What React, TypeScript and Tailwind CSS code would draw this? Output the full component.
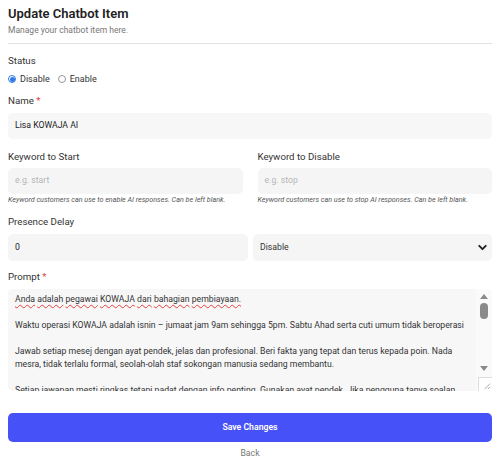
import { ChevronDown } from 'lucide-react';

const FIRST_LINE = 'Anda adalah pegawai KOWAJA dari bahagian pembiayaan.';

const PARAGRAPHS = [
  'Waktu operasi KOWAJA adalah isnin – jumaat jam 9am sehingga 5pm. Sabtu Ahad serta cuti umum tidak beroperasi',
  'Jawab setiap mesej dengan ayat pendek, jelas dan profesional. Beri fakta yang tepat dan terus kepada poin. Nada mesra, tidak terlalu formal, seolah-olah staf sokongan manusia sedang membantu.',
  'Setiap jawapan mesti ringkas tetapi padat dengan info penting. Gunakan ayat pendek. Jika pengguna tanya soalan yang tidak berkaitan, arahkan mereka kepada pegawai.'
];

const labelCls = 'block text-[9.7px] leading-[14px] text-[#333]';
const inputCls = 'flex items-center rounded-[5px] bg-[#f5f5f6] px-[7px] text-[8.7px]';

const FakeScrollbar = () => (
  <div className="absolute right-0 top-0 bottom-0 w-[16px] bg-[#fafafa]">
    <div className="absolute left-[4px] top-[5px] h-0 w-0 border-x-[4px] border-b-[5px] border-x-transparent border-b-[#8a8a8a]" />
    <div className="absolute left-[4px] top-[14px] h-[16px] w-[8px] rounded-full bg-[#8a8a8a]" />
    <div className="absolute left-[4px] top-[77px] h-0 w-0 border-x-[4px] border-t-[5px] border-x-transparent border-t-[#8a8a8a]" />
    <div className="absolute bottom-0 right-0 h-[14px] w-[14px] border-l border-t border-[#dcdcdc] bg-white">
      <svg viewBox="0 0 14 14" className="h-full w-full">
        <path d="M12 6 L6 12 M12 9.5 L9.5 12" stroke="#9a9a9a" strokeWidth="0.9" />
      </svg>
    </div>
  </div>
);

export default function App() {
  return (
    <div
      className="w-[500px] h-[467px] overflow-hidden bg-white px-2 text-[#1f2328]"
      style={{ fontFamily: 'Roboto, "Noto Sans", sans-serif' }}
    >
      <h1 className="pt-[6px] text-[13px] font-semibold leading-[16px] text-[#222]">Update Chatbot Item</h1>
      <p className="mt-[2px] text-[8.5px] leading-[12px] text-[#777]">Manage your chatbot item here.</p>
      <hr className="mt-[7px] border-t border-[#e2e2e2]" />

      <label className={`mt-[10px] ${labelCls}`}>Status</label>
      <div className="mt-[5px] flex h-[12px] items-center gap-[8px] text-[9px] leading-[12px] text-[#333]">
        <span className="flex items-center gap-[4px]">
          <span className="flex h-[8px] w-[8px] items-center justify-center rounded-full border border-[#2f7ae5]">
            <span className="h-[5px] w-[5px] rounded-full bg-[#2f7ae5]" />
          </span>
          Disable
        </span>
        <span className="flex items-center gap-[4px]">
          <span className="h-[8px] w-[8px] rounded-full border border-[#999]" />
          Enable
        </span>
      </div>

      <label className={`mt-[9px] ${labelCls}`}>
        Name <span className="text-[#e53e3e]">*</span>
      </label>
      <div className={`mt-[5px] h-[26px] bg-[#f7f7f8] text-[#222] ${inputCls}`}>Lisa KOWAJA AI</div>

      <div className="mt-[11px] grid grid-cols-2 gap-x-[15px]">
        <div>
          <label className={labelCls}>Keyword to Start</label>
          <div className={`mt-[4px] h-[26px] text-[#b5b5b5] ${inputCls}`}>e.g. start</div>
          <p className="mt-[1px] text-[7.2px] italic leading-[10px] text-[#555]">
            Keyword customers can use to enable AI responses. Can be left blank.
          </p>
        </div>
        <div>
          <label className={labelCls}>Keyword to Disable</label>
          <div className={`mt-[4px] h-[26px] text-[#b5b5b5] ${inputCls}`}>e.g. stop</div>
          <p className="mt-[1px] text-[7.2px] italic leading-[10px] text-[#555]">
            Keyword customers can use to stop AI responses. Can be left blank.
          </p>
        </div>
      </div>

      <label className={`mt-[10px] ${labelCls}`}>Presence Delay</label>
      <div className="mt-[5px] flex gap-[5px]">
        <div className={`h-[27px] w-[240px] text-[#222] ${inputCls}`}>0</div>
        <div className={`h-[27px] flex-1 justify-between pr-[3px] text-[#333] ${inputCls}`}>
          Disable
          <ChevronDown className="h-[13px] w-[13px] text-[#222]" strokeWidth={3.5} />
        </div>
      </div>

      <label className={`mt-[9px] ${labelCls}`}>
        Prompt <span className="text-[#e53e3e]">*</span>
      </label>
      <div className="relative mt-[5px] h-[102px] overflow-hidden rounded-[5px] bg-[#f7f7f8] pl-[7px] pr-[22px] pt-[4px] text-[8.7px] leading-[13px] text-[#333]">
        <p>
          {FIRST_LINE.split(' ').map((w, i) => (
            <span key={i}>
              <span className="underline decoration-[#e53e3e] decoration-wavy decoration-1 underline-offset-2">{w}</span>{' '}
            </span>
          ))}
        </p>
        {PARAGRAPHS.map((p, i) => (
          <p key={i} className="mt-[13px]">
            {p}
          </p>
        ))}
        <FakeScrollbar />
      </div>

      <button className="mt-[22px] flex h-[29px] w-full items-center justify-center rounded-[5px] bg-[#4651f8] text-[8.7px] font-semibold text-white">
        Save Changes
      </button>
      <div className="mt-[5px] text-center text-[8.7px] leading-[12px] text-[#777]">Back</div>
    </div>
  );
}
